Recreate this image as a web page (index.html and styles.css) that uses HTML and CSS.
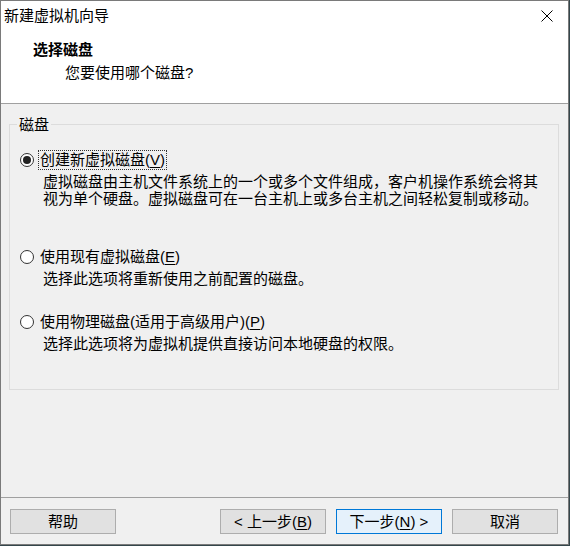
FILE: index.html
```html
<!DOCTYPE html>
<html lang="zh-CN">
<head>
<meta charset="utf-8">
<title>新建虚拟机向导</title>
<link rel="stylesheet" href="styles.css">
</head>
<body>
<div class="window">
  <div class="titlebar">
    <span class="title">新建虚拟机向导</span>
    <span class="close-btn">
      <svg width="12" height="12" viewBox="0 0 12 12"><path d="M0.5 0.5 L11.5 11.5 M11.5 0.5 L0.5 11.5" stroke="#000" stroke-width="1" fill="none"/></svg>
    </span>
  </div>
  <div class="header">
    <div class="h-title">选择磁盘</div>
    <div class="h-sub">您要使用哪个磁盘?</div>
  </div>
  <div class="content">
    <div class="group">
      <span class="legend">磁盘</span>
      <div class="option">
        <div class="radio-row"><span class="radio checked"></span><span class="label focus">创建新虚拟磁盘(<u>V</u>)</span></div>
        <div class="desc">虚拟磁盘由主机文件系统上的一个或多个文件组成，客户机操作系统会将其<br>视为单个硬盘。虚拟磁盘可在一台主机上或多台主机之间轻松复制或移动。</div>
      </div>
      <div class="option opt2">
        <div class="radio-row"><span class="radio"></span><span class="label">使用现有虚拟磁盘(<u>E</u>)</span></div>
        <div class="desc">选择此选项将重新使用之前配置的磁盘。</div>
      </div>
      <div class="option opt3">
        <div class="radio-row"><span class="radio"></span><span class="label">使用物理磁盘(适用于高级用户)(<u>P</u>)</span></div>
        <div class="desc">选择此选项将为虚拟机提供直接访问本地硬盘的权限。</div>
      </div>
    </div>
  </div>
  <div class="footer">
    <button class="btn">帮助</button>
    <div class="spacer"></div>
    <button class="btn">&lt; 上一步(<u>B</u>)</button>
    <button class="btn primary">下一步(<u>N</u>) &gt;</button>
    <button class="btn">取消</button>
  </div>
</div>
</body>
</html>
```

FILE: styles.css
```css
html, body {
  margin: 0;
  padding: 0;
}
body {
  background: #34464b;
  font-family: "Liberation Sans", "Noto Sans CJK SC", sans-serif;
  font-size: 15px;
  color: #000;
}
.window {
  width: 569px;
  height: 545px;
  box-sizing: border-box;
  border: 1px solid #7a7a7a;
  background: #f0f0f0;
  display: flex;
  flex-direction: column;
}
.titlebar {
  height: 29px;
  background: #fff;
  display: flex;
  align-items: center;
  justify-content: space-between;
  padding-left: 3px;
  flex: none;
}
.title {
  line-height: 29px;
}
.close-btn {
  width: 42px;
  height: 29px;
  display: flex;
  align-items: center;
  justify-content: center;
}
.header {
  height: 74px;
  box-sizing: border-box;
  background: #fff;
  border-bottom: 1px solid #a0a0a0;
  padding: 10px 0 0 32px;
  flex: none;
}
.h-title {
  font-weight: bold;
  line-height: 20px;
}
.h-sub {
  line-height: 20px;
  margin-top: 3px;
  padding-left: 32px;
}
.content {
  flex: 1;
  padding: 20px 9px 0 8px;
}
.group {
  position: relative;
  border: 1px solid #dcdcdc;
  height: 266px;
  box-sizing: border-box;
  padding: 25px 0 0 10px;
}
.legend {
  position: absolute;
  top: -10px;
  left: 7px;
  padding: 0 2px;
  line-height: 20px;
  background: #f0f0f0;
}
.radio-row {
  display: flex;
  align-items: center;
  height: 20px;
}
.radio {
  width: 14px;
  height: 14px;
  box-sizing: border-box;
  border: 1px solid #333;
  border-radius: 50%;
  background: #fff;
  margin-right: 4px;
  position: relative;
  flex: none;
}
.radio.checked::after {
  content: "";
  position: absolute;
  left: 2px;
  top: 2px;
  width: 8px;
  height: 8px;
  border-radius: 50%;
  background: #222;
}
.label {
  padding: 0 1px;
  border: 1px dotted transparent;
  line-height: 18px;
}
.label.focus {
  border-color: #333;
}
.desc {
  margin-top: 3px;
  padding-left: 23px;
  line-height: 17px;
}
.opt2 {
  margin-top: 40px;
}
.opt3 {
  margin-top: 25px;
}
u {
  text-decoration: underline;
  text-underline-offset: 2px;
}
.footer {
  height: 47px;
  box-sizing: border-box;
  border-top: 1px solid #a0a0a0;
  padding: 11px 10px 10px 9px;
  display: flex;
  gap: 10px;
  flex: none;
}
.spacer {
  flex: 1;
}
.btn {
  width: 106px;
  height: 25px;
  box-sizing: border-box;
  background: #e1e1e1;
  border: 1px solid #adadad;
  font-family: inherit;
  font-size: 15px;
  color: #000;
  padding: 0;
  line-height: 22px;
}
.btn.primary {
  background: #e5f1fb;
  border-color: #0078d7;
}
```
